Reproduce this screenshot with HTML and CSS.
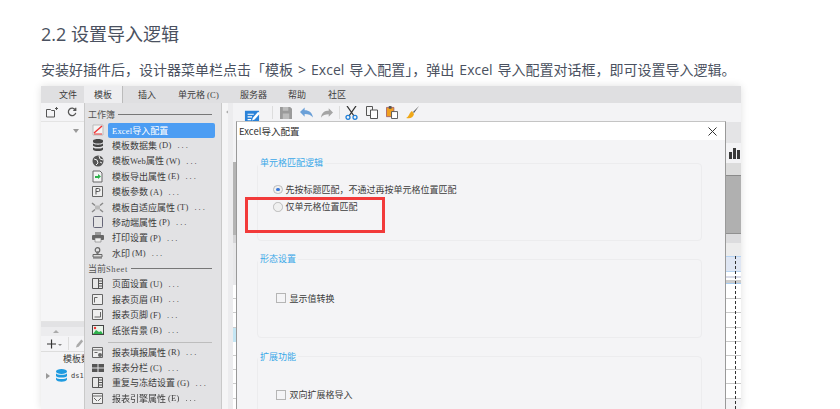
FILE: index.html
```html
<!DOCTYPE html>
<html>
<head>
	<meta charset="utf-8">
	<title>设置导入逻辑</title>
	<link rel="stylesheet" href="styles.css">
</head>
<body>
	<div class="articulo">
		<h2 class="titulo">2.2 设置导入逻辑</h2>
		<p class="parrafo">安装好插件后，设计器菜单栏点击「模板 &gt; Excel 导入配置」，弹出 Excel 导入配置对话框，即可设置导入逻辑。</p>
		<div class="captura">
			<div class="menubar">
				<span class="tab tab_file">文件</span>
				<span class="tab tab_activo">模板</span>
				<span class="tab tab_insert">插入</span>
				<span class="tab tab_cell">单元格<span class="lat atajo">(C)</span></span>
				<span class="tab tab_server">服务器</span>
				<span class="tab tab_help">帮助</span>
				<span class="tab tab_com">社区</span>
			</div>
			<div class="cuerpo">
				<div class="izquierda">
					<div class="izq_tools">
						<svg width="12" height="11" viewBox="0 0 12 11"><path d="M.5 2.500h4l1 1h3v6.500h-8zM9 1.500h3M10.500 0v3" fill="none" stroke="#555"/></svg>
						<svg width="10" height="10" viewBox="0 0 12 12"><path d="M10 3.500A4.500 4.500 0 1 0 10.500 7M10.500 1v3h-3" fill="none" stroke="#555" stroke-width="1.500"/></svg>
					</div>
					<div class="izq_lista"><span class="flecha_abajo"></span></div>
					<div class="izq_corte"><span class="flecha_arriba"></span></div>
					<div class="izq_bar">
						<svg width="10" height="10" viewBox="0 0 10 10"><path d="M5 0v10M0 5h10" stroke="#333" stroke-width="1.300"/></svg>
						<span class="mas_flecha"></span><span class="izq_sep"></span>
						<svg width="10" height="11" viewBox="0 0 10 11"><path d="M1 10l1-3 5-6 2 2-5 6z" fill="#aaa"/></svg>
					</div>
					<div class="izq_tit">模板数据</div>
					<div class="izq_ds">
						<span class="flecha_der"></span>
						<svg width="11" height="13" viewBox="0 0 11 13"><ellipse cx="5.500" cy="2.500" rx="5.500" ry="2.500" fill="#1f9be0"/><path d="M0 4.200c1 2 10 2 11 0V7c-1 2-10 2-11 0zM0 8.500c1 2 10 2 11 0v2c-1 3-10 3-11 0z" fill="#1f9be0"/></svg>
						<span class="ds_nom">ds1</span>
					</div>
				</div>
				<div class="menu">
					<div class="menu_tit"><span>工作簿</span><i></i></div>
					<div class="item item_activo"><span class="ico"><svg width="12" height="12" viewBox="0 0 12 12"><path d="M1 1h10v10H1z" fill="#f4f4f4" stroke="#bbb"/><path d="M2 9l8-7" stroke="#e33" stroke-width="1.400"/><path d="M2 10h8" stroke="#e33"/></svg></span><span class="item_txt"><span class="lat">Excel</span>导入配置</span></div>
					<div class="item"><span class="ico"><svg width="10" height="12" viewBox="0 0 10 12"><path d="M0 1.500C1-.5 9-.5 10 1.500V3C9 5 1 5 0 3zM0 4.600c2 1.600 8 1.600 10 0v2.200C8 8.400 2 8.400 0 6.800zM0 8.400c2 1.600 8 1.600 10 0V10.500C9 12.500 1 12.500 0 10.500z" fill="#444"/></svg></span>模板数据集<span class="lat atajo">(D)</span><span class="lat puntos">...</span></div>
					<div class="item"><span class="ico"><svg width="12" height="12" viewBox="0 0 12 12"><circle cx="6" cy="6" r="5.500" fill="#555"/><path d="M2 4l3 1 1 3-2 2M7 1l1 3 3 1M8 7l2 1" stroke="#eee" fill="none"/></svg></span>模板<span class="lat">Web</span>属性<span class="lat atajo">(W)</span><span class="lat puntos">...</span></div>
					<div class="item"><span class="ico"><svg width="11" height="13" viewBox="0 0 11 13"><path d="M1 1h7l2 2v9H1z" fill="#f4f4f4" stroke="#666"/><path d="M3 6h3V4l3 2.500-3 2.500V8H3z" fill="#2eb24c"/></svg></span>模板导出属性<span class="lat atajo">(E)</span><span class="lat puntos">...</span></div>
					<div class="item"><span class="ico"><svg width="11" height="11" viewBox="0 0 11 11"><path d="M.5.5h10v10H.500z" fill="#eee" stroke="#666"/><path d="M4 8.500V2.500h2.500a1.500 1.500 0 0 1 0 3H4" fill="none" stroke="#555"/></svg></span>模板参数<span class="lat atajo">(A)</span><span class="lat puntos">...</span></div>
					<div class="item"><span class="ico"><svg width="13" height="11" viewBox="0 0 13 11"><path d="M1 1l3 2.500M12 1L9 3.500M1 10l3-2.500M12 10L9 7.500" stroke="#888" stroke-width="1.500"/><path d="M4 3.500h5v4H4z" fill="#bbb"/></svg></span>模板自适应属性<span class="lat atajo">(T)</span><span class="lat puntos">...</span></div>
					<div class="item"><span class="ico"><svg width="10" height="12" viewBox="0 0 10 12"><rect x=".5" y=".5" width="9" height="11" rx="1" fill="#e4e4e4" stroke="#667"/></svg></span>移动端属性<span class="lat atajo">(P)</span><span class="lat puntos">...</span></div>
					<div class="item"><span class="ico"><svg width="12" height="11" viewBox="0 0 12 11"><path d="M3 0h6v3H3z" fill="#999"/><rect y="3" width="12" height="5" rx="1" fill="#666"/><path d="M3 6h6v4H3z" fill="#eee" stroke="#777" stroke-width=".6"/></svg></span>打印设置<span class="lat atajo">(P)</span><span class="lat puntos">...</span></div>
					<div class="item"><span class="ico"><svg width="11" height="12" viewBox="0 0 11 12"><circle cx="5.500" cy="3" r="2.300" fill="none" stroke="#666" stroke-width="1.200"/><path d="M5 5h1v2H5zM1 7.500h9V10H1zM1 11h9" fill="#ddd" stroke="#666"/></svg></span>水印<span class="lat atajo">(M)</span><span class="lat puntos">...</span></div>
					<div class="menu_tit"><span>当前<span class="lat lat_g">Sheet</span></span><i></i></div>
					<div class="item"><span class="ico"><svg width="11" height="11" viewBox="0 0 11 11"><path d="M.5.5h10v10H.500zM6.500 .5v10M6.500 3h4M6.500 5.500h4M6.500 8h4" fill="#e8e8e8" stroke="#555"/></svg></span>页面设置<span class="lat atajo">(U)</span><span class="lat puntos">...</span></div>
					<div class="item"><span class="ico"><svg width="11" height="11" viewBox="0 0 11 11"><path d="M.5.5h10v10H.500zM2.500 3.500h3M2.500 3.500v5" fill="#eee" stroke="#666"/></svg></span>报表页眉<span class="lat atajo">(H)</span><span class="lat puntos">...</span></div>
					<div class="item"><span class="ico"><svg width="11" height="11" viewBox="0 0 11 11"><path d="M.5.5h10v10H.500zM2.500 8h6M8.500 3v5" fill="#eee" stroke="#666"/></svg></span>报表页脚<span class="lat atajo">(F)</span><span class="lat puntos">...</span></div>
					<div class="item"><span class="ico"><svg width="12" height="10" viewBox="0 0 12 10"><path d="M0 0h12v10H0z" fill="#444"/><path d="M1 1h10v8H1z" fill="#e9f3ea"/><path d="M1 9l3-4 3 2 2-1 2 3z" fill="#2eb24c"/><circle cx="3" cy="3" r="1.200" fill="#e33"/></svg></span>纸张背景<span class="lat atajo">(B)</span><span class="lat puntos">...</span></div>
					<div class="sep"></div>
					<div class="item"><span class="ico"><svg width="11" height="11" viewBox="0 0 11 11"><path d="M.5.5h10v10H.500zM.5 3h10M2.500 5.500h3" fill="#eee" stroke="#666"/><circle cx="8" cy="8" r="2" fill="#666"/></svg></span>报表填报属性<span class="lat atajo">(R)</span><span class="lat puntos">...</span></div>
					<div class="item"><span class="ico"><svg width="12" height="10" viewBox="0 0 12 10"><path d="M0 1h5.500v3.500H0zM6.500 1H12v3.500H6.500zM0 5.500h5.500V9H0zM6.500 5.500H12V9H6.500z" fill="#555"/></svg></span>报表分栏<span class="lat atajo">(C)</span><span class="lat puntos">...</span></div>
					<div class="item"><span class="ico"><svg width="11" height="11" viewBox="0 0 11 11"><path d="M.5.5h10v10H.500zM6.500 .5v10M6.500 3h4M6.500 5.500h4M6.500 8h4" fill="#e8e8e8" stroke="#555"/></svg></span>重复与冻结设置<span class="lat atajo">(G)</span><span class="lat puntos">...</span></div>
					<div class="item"><span class="ico"><svg width="11" height="11" viewBox="0 0 11 11"><path d="M.5.5h10v10H.500zM.5 3h10M2 5l3 3M9 5L6 8" fill="#eee" stroke="#666"/></svg></span>报表引擎属性<span class="lat atajo">(E)</span><span class="lat puntos">...</span></div>
				</div>
				<div class="canal">
					<div class="canal_blanco"><span class="canal_flecha"></span></div>
					<div class="canal_cab"></div>
					<div class="canal_col">
						<div class="col_claro"></div>
						<div class="col_scroll"></div>
						<div class="col_medio"></div>
						<div class="col_gris"></div>
						<div class="col_fila"></div><div class="col_fila"></div><div class="col_fila"></div>
						<div class="col_fila col_azul"></div>
						<div class="col_fila"></div><div class="col_fila"></div><div class="col_fila"></div><div class="col_fila"></div><div class="col_fila"></div>
					</div>
				</div>
				<div class="zona">
					<div class="toolbar">
						<svg class="tb_edit" width="16" height="15" viewBox="0 0 18 17"><path d="M1 2h16v15H1z" fill="#2a82d8"/><path d="M4 6h7M4 9h5M4 12h4" stroke="#fff" stroke-width="1.300"/><path d="M9 13l1-3 6-7 2 2-6 7z" fill="#fff"/></svg>
						<i class="tb_sep tb_sep1"></i>
						<svg width="12" height="12" viewBox="0 0 13 13"><path d="M0 0h11l2 2v11H0z" fill="#9a9a9a"/><path d="M3 0h6v4H3zM3 7h7v6H3z" fill="#bcbcbc"/></svg>
						<svg width="13" height="11" viewBox="0 0 14 11"><path d="M5 0v3c5 0 8 2 9 8-2-3-5-4-9-4v3L0 5z" fill="#6ba0d8"/></svg>
						<svg width="12" height="10" viewBox="0 0 14 11"><path d="M9 0v3C4 3 1 5 0 11c2-3 5-4 9-4v3l5-5z" fill="#a5a5a5"/></svg>
						<i class="tb_sep tb_sep2"></i>
						<svg width="13" height="14" viewBox="0 0 13 14"><path d="M2 0l7 10M11 0L4 10" stroke="#333" stroke-width="1.300"/><circle cx="3" cy="11.300" r="2" fill="none" stroke="#1f7fd8" stroke-width="1.300"/><circle cx="10" cy="11.300" r="2" fill="none" stroke="#1f7fd8" stroke-width="1.300"/></svg>
						<svg width="12" height="13" viewBox="0 0 12 13"><path d="M.5.5h6v9h-6z" fill="#f4f4f4" stroke="#555"/><path d="M4.500 4h7v8.500h-7z" fill="#fff" stroke="#555"/></svg>
						<svg width="12" height="13" viewBox="0 0 13 14"><path d="M.5 1.500h8v10h-8z" fill="#f0a020" stroke="#a66"/><path d="M3 0h3v3H3z" fill="#555"/><path d="M6 6h6.500v7.500H6z" fill="#fff" stroke="#555"/></svg>
						<svg width="13" height="13" viewBox="0 0 13 13"><path d="M13 0L7 6l1 1z" fill="#555"/><path d="M6 5l2 3c-1 4-4 5-8 4 3-1 3-5 6-7z" fill="#f0a818"/></svg>
					</div>
					<div class="hoja">
						<div class="hoja_gris"></div>
						<div class="hoja_barra"><svg width="11" height="11" viewBox="0 0 11 11"><path d="M0 4h3v7H0zM4 0h3v11H4zM8 2h3v9H8z" fill="#3a3a3a"/></svg></div>
						<div class="hoja_regla"></div>
						<div class="hoja_oscuro"></div>
						<div class="hoja_regla2"></div>
						<div class="hoja_cab"></div>
						<div class="celda celda_sel"></div>
						<div class="celda celda_f"></div>
						<div class="celda celda_p"></div>
						<div class="celda"></div><div class="celda"></div><div class="celda"></div>
						<div class="celda"></div><div class="celda"></div><div class="celda"></div><div class="celda"></div>
						<i class="hoja_punteada"></i>
					</div>
				</div>
			</div>
			<div class="dialogo">
				<div class="dlg_tit"><span>Excel导入配置</span>
					<svg width="9" height="9" viewBox="0 0 9 9"><path d="M.5.5l8 8M8.500.5l-8 8" stroke="#333" fill="none"/></svg>
				</div>
				<div class="dlg_cuerpo">
					<fieldset class="grupo grupo1">
						<legend>单元格匹配逻辑</legend>
						<label class="radio"><i class="rd rd_on"></i>先按标题匹配，不通过再按单元格位置匹配</label>
						<label class="radio"><i class="rd"></i>仅单元格位置匹配</label>
					</fieldset>
					<fieldset class="grupo grupo2">
						<legend>形态设置</legend>
						<label class="check"><i class="cb"></i>显示值转换</label>
					</fieldset>
					<fieldset class="grupo grupo3">
						<legend>扩展功能</legend>
						<label class="check"><i class="cb"></i>双向扩展格导入</label>
					</fieldset>
				</div>
			</div>
			<div class="marca_roja"></div>
		</div>
	</div>
</body>
</html>
```

FILE: styles.css
```css
html, body {
	margin: 0;
	background: #fff;
	height: 409px;
	overflow: hidden;
}

.articulo {
	padding: 22px 0 0 41px;
	font-family: "Open Sans", "Noto Sans CJK SC", sans-serif;
	color: #4a5160;
}

.titulo {
	margin: 0;
	font-size: 18px;
	font-weight: 400;
	line-height: 24px;
}

.parrafo {
	margin: 12px 0 4px;
	font-size: 14px;
	line-height: 24px;
	word-spacing: 1.4px;
	white-space: nowrap;
}

.captura {
	position: relative;
	width: 700px;
	height: 323px;
	overflow: hidden;
	background: #f3f3f5;
	box-shadow: 0 0 8px rgba(0,0,0,.12);
	font-family: "Noto Sans CJK SC", sans-serif;
	font-size: 9px;
	color: #3c3c3c;
	filter: blur(.3px);
}

.lat {
	font-family: "Liberation Serif", serif;
	font-size: 8.5px;
	letter-spacing: .2px;
}

.lat_g {
	letter-spacing: .6px;
}

.atajo {
	margin-left: 2px;
}

.puntos {
	margin-left: 6px;
	letter-spacing: 2px;
}

.menubar {
	display: flex;
	height: 17px;
	background: #dfdfe1;
	line-height: 15px;
}

.tab {
	padding-top: 1px;
	white-space: nowrap;
}

.tab_file { margin-left: 18px; width: 18px; }
.tab_activo {
	width: 39px;
	margin-left: 7px;
	text-align: center;
	background: #eeeef0;
	border-right: 1px solid #bbb;
	box-sizing: border-box;
}
.tab_insert { margin-left: 15px; width: 18px; }
.tab_cell { margin-left: 22px; width: 38px; }
.tab_server { margin-left: 24px; width: 27px; }
.tab_help { margin-left: 21px; width: 18px; }
.tab_com { margin-left: 22px; width: 18px; }

.cuerpo {
	display: flex;
	height: 306px;
}

.izquierda {
	width: 43px;
	display: flex;
	flex-direction: column;
	background: #f4f4f6;
	overflow: hidden;
	white-space: nowrap;
}

.izq_tools {
	height: 19px;
	display: flex;
	align-items: center;
	gap: 9px;
	padding-left: 5px;
	box-sizing: border-box;
	border-bottom: 1px solid #e4e4e4;
}

.izq_lista {
	height: 200px;
	background: #f6f6f7;
	border-bottom: 1px solid #e4e4e4;
	box-sizing: border-box;
}

.flecha_abajo {
	display: block;
	width: 0;
	margin: 7px 0 0 32px;
	border: 3px solid transparent;
	border-top: 4px solid #999;
	border-bottom: 0;
}

.izq_corte {
	height: 14px;
	background: #ececee;
	border-top: 5px solid #e2e2e4;
	box-sizing: border-box;
}

.flecha_arriba {
	display: block;
	width: 0;
	margin: 3px 0 0 12px;
	border: 3px solid transparent;
	border-bottom: 3px solid #aaa;
	border-top: 0;
}

.izq_bar {
	height: 16px;
	display: flex;
	align-items: center;
	padding-left: 6px;
	box-sizing: border-box;
	border-bottom: 1px solid #ddd;
}

.mas_flecha {
	margin: 3px 0 0 2px;
	border: 2px solid transparent;
	border-top: 2px solid #888;
	border-bottom: 0;
}

.izq_sep {
	width: 1px;
	height: 13px;
	margin: 0 6px 0 6px;
	background: #ddd;
}

.izq_tit {
	margin: 0 0 0 22px;
	font-size: 9px;
	line-height: 14px;
}

.izq_ds {
	display: flex;
	align-items: center;
	margin-top: 3px;
	padding-left: 5px;
}

.flecha_der {
	margin-right: 6px;
	border: 3px solid transparent;
	border-left: 4px solid #999;
	border-right: 0;
}

.ds_nom {
	margin-left: 4px;
	font-family: "DejaVu Sans Mono", monospace;
	font-size: 7px;
}

.menu {
	width: 138px;
	box-sizing: border-box;
	padding: 4px 0 0;
	background: #e2e2e4;
	border-left: 1px solid #c9c9c9;
	border-right: 1px solid #c9c9c9;
}

.menu_tit {
	display: flex;
	align-items: center;
	height: 15.4px;
	padding: 0 9px 0 3px;
	gap: 3px;
	color: #555;
}

.menu_tit i {
	flex: 1;
	height: 1px;
	background: #777;
}

.item {
	display: flex;
	align-items: center;
	height: 15.4px;
	white-space: nowrap;
}

.ico {
	width: 25px;
	margin-right: 2px;
	display: flex;
	justify-content: center;
}

.item_activo {
	color: #fff;
}

.item_txt {
	margin-left: -4px;
	padding-left: 4px;
	width: 107px;
	height: 15px;
	line-height: 15px;
	box-sizing: border-box;
	background: #4c9df3;
	border-radius: 2px;
}

.sep {
	height: 1px;
	margin: 4.6px 9px 1px 23px;
	background: #bdbdbd;
}

.canal {
	width: 14px;
	display: flex;
	background: #f1f1f3;
}

.canal_blanco {
	width: 6px;
	background: #f5f5f6;
}

.canal_flecha {
	display: block;
	width: 0;
	margin: 6px 0 0 4px;
	border: 3px solid transparent;
	border-right: 4px solid #aaa;
	border-left: 0;
}

.canal_cab {
	width: 4.6px;
	background: #ececee;
}

.canal_col {
	flex: 1;
}

.col_claro { height: 59px; background: #f3f3f5; }
.col_scroll { height: 73px; background: #b4b4b4; }
.col_medio { height: 8px; background: #d4d4d6; }
.col_gris { height: 42px; background: #e8e8ea; }

.col_fila {
	height: 14.2px;
	box-sizing: border-box;
	background: #fff;
	border-bottom: 1px solid #ccc;
}

.col_azul {
	background: #c4e6f4;
	border-bottom: 0;
}

.zona {
	flex: 1;
	display: flex;
	flex-direction: column;
	min-width: 0;
}

.toolbar {
	height: 19px;
	display: flex;
	align-items: center;
	gap: 8px;
	padding-left: 8px;
	background: #f3f3f5;
}

.tb_sep {
	width: 1px;
	height: 13px;
	background: #ddd;
}

.tb_edit { margin: 8px 4px 0 0; }
.tb_sep1 { margin-right: -1px; }
.tb_sep2 { margin: 0 -3px 0 -2px; }

.hoja {
	flex: 1;
	position: relative;
	display: flex;
	flex-direction: column;
	align-items: flex-end;
}

.hoja > div {
	width: 15px;
	overflow: hidden;
}

.hoja_gris { height: 21px; background: #e4e4e6; }
.hoja_barra { height: 20px; background: #f3f3f5; padding: 5px 0 0 3px; box-sizing: border-box; }
.hoja_regla { height: 13px; background: #dcdcdc; border-bottom: 1px solid #8a8a8a; box-sizing: border-box; }
.hoja_oscuro { height: 58px; background: #b0b0b0; border-bottom: 1px solid #909090; box-sizing: border-box; }
.hoja_regla2 { height: 9px; background: #dcdcde; }
.hoja_cab { height: 13px; background: #ececec; }

.hoja .celda {
	height: 14.2px;
	box-sizing: border-box;
	background: #fff;
	border-bottom: 1px solid #c9c9c9;
}

.hoja .celda_sel {
	height: 16px;
	background: #dfe6f3;
	border-top: 1px solid #b7d4f3;
	border-bottom: 1px solid #b7d4f3;
}

.hoja .celda_f {
	height: 11.5px;
	background: linear-gradient(#fff 4px, #d8dbe8 4px, #d8dbe8 6px, #fff 6px, #fff 8px, #ccc 8px);
	border-bottom: 1px solid #a6cdf3;
}

.hoja .celda_p {
	height: 15.8px;
}

.hoja_punteada {
	position: absolute;
	top: 134px;
	bottom: 0;
	right: 5px;
	border-left: 1px dashed #333;
}

.dialogo {
	position: absolute;
	left: 195px;
	top: 35px;
	width: 490px;
	height: 288px;
	background: #f4f4f6;
	border-top: 1px solid #c4c4c4;
	border-left: 1px solid #999;
	border-right: 1px solid #999;
	box-sizing: border-box;
}

.dlg_tit {
	height: 18px;
	background: #fff;
	display: flex;
	align-items: center;
	justify-content: space-between;
	padding: 0 8px 0 2px;
	font-size: 9.5px;
	color: #333;
}

.dlg_cuerpo {
	padding: 16px 23px 0 20px;
}

.grupo {
	margin: 0 0 11px;
	padding: 0;
	min-width: 0;
	border: 1px solid #ececee;
	border-radius: 4px;
	box-sizing: border-box;
}

.grupo legend {
	padding: 0 2px;
	margin-left: 0;
	color: #3aa8e8;
	font-size: 9px;
	line-height: 14px;
}

.grupo1 { height: 85px; padding-top: 12px; }
.grupo2 { height: 86px; padding-top: 24.5px; }
.grupo3 { height: 100px; margin-top: 11.7px; padding-top: 23.8px; }

.radio, .check {
	display: flex;
	align-items: center;
	height: 15px;
	color: #3c3c3c;
	font-size: 9px;
}

.radio { gap: 3px; margin-left: 15px; }
.check { gap: 3.5px; margin-left: 18px; }
.grupo1 .radio:first-of-type { margin-bottom: 2.4px; }

.rd {
	width: 9.5px;
	height: 9.5px;
	border: 1px solid #bbb;
	border-radius: 50%;
	box-sizing: border-box;
	background: #f0f0f0;
	position: relative;
}

.rd_on::after {
	content: "";
	position: absolute;
	left: 2px;
	top: 2px;
	width: 3.5px;
	height: 3.5px;
	border-radius: 50%;
	background: #3c78d8;
}

.cb {
	width: 10px;
	height: 10px;
	border: 1px solid #b5b5b5;
	box-sizing: border-box;
	background: #f4f4f6;
}

.marca_roja {
	position: absolute;
	left: 204px;
	top: 111px;
	width: 140px;
	height: 36px;
	border: 3px solid #f23a3a;
	box-sizing: border-box;
}
```
